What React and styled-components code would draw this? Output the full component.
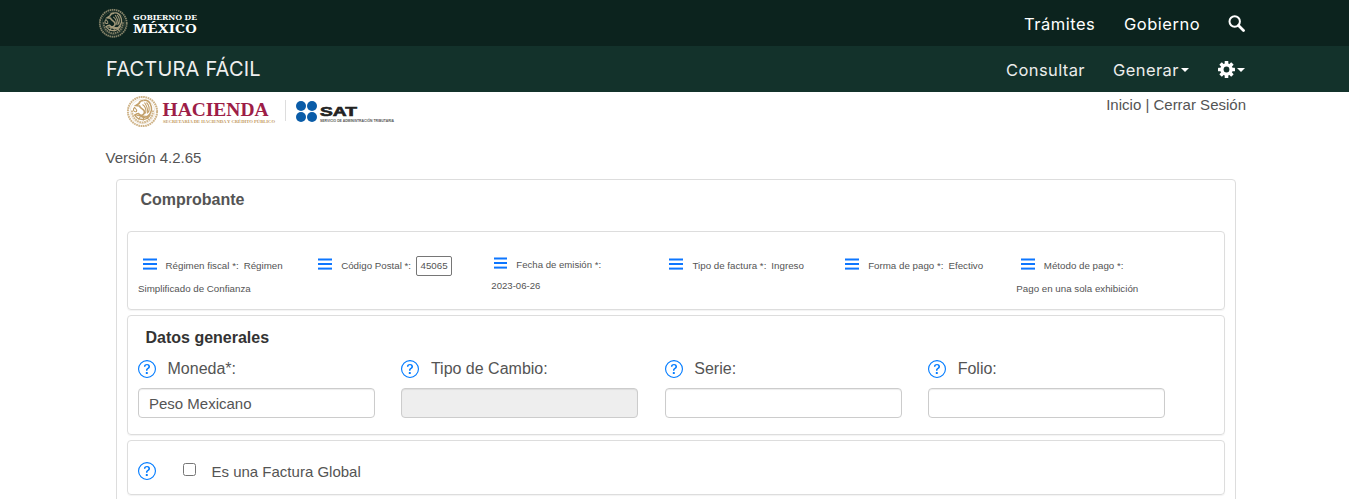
import React from "react";
import styled, { createGlobalStyle } from "styled-components";

const GlobalStyle = createGlobalStyle`
  *, *::before, *::after { box-sizing: border-box; }
  html, body { height: 499px; overflow: hidden; }
  body {
    margin: 0;
    background: #fff;
    color: #545454;
    font-family: "Liberation Sans", Arial, sans-serif;
    font-size: 16px;
  }
`;

const Bar = styled.header`
  height: 46px;
  background: ${(p) => (p.$sub ? "#13322b" : "#0c231e")};
`;

const BarInner = styled.div`
  width: 1140px;
  height: 100%;
  margin-left: 105px;
  display: flex;
  align-items: center;
  justify-content: space-between;
`;

const Brand = styled.svg`
  display: block;
  margin-left: -7px;
`;

const AppName = styled.h1`
  margin: 0;
  padding: 0 0 1px 1px;
  font: 400 20px/24px Inter, sans-serif;
  letter-spacing: ${(p) => p.$spacing};
  color: #efefef;
  white-space: nowrap;
`;

const Nav = styled.nav`
  display: flex;
  align-items: center;
  height: 100%;
`;

const NavLink = styled.a`
  width: ${(p) => p.$width}px;
  margin-right: ${(p) => p.$gap}px;
  font: 400 16.5px/20px Inter, sans-serif;
  letter-spacing: ${(p) => p.$spacing || 0}px;
  color: ${(p) => (p.$dim ? "#ececec" : "#fff")};
  white-space: nowrap;
  padding-top: 1px;
`;

const Caret = styled.span`
  border: 4px solid transparent;
  border-top-color: #fff;
  border-bottom: 0;
  margin: 1px ${(p) => p.$right || 0}px 0 ${(p) => p.$left || 0}px;
`;

const Page = styled.main`
  width: 1141px;
  margin-left: 105px;
`;

const TopRow = styled.div`
  display: flex;
  justify-content: space-between;
  height: 56px;
`;

const Logos = styled.svg`
  display: block;
  margin-left: 21px;
`;

const Session = styled.div`
  padding-top: 4px;
  font-size: 15px;
  line-height: 18px;
  letter-spacing: ${(p) => p.$spacing || 0}px;
`;

const Version = styled.div`
  height: 31px;
  padding: 1px 0 0 0.5px;
  font-size: 15px;
  line-height: 18px;
`;

const Outer = styled.section`
  width: 1120px;
  height: 420px;
  margin-left: 11px;
  padding: 0 10px;
  border: 1px solid #ddd;
  border-radius: 4px;
`;

const PanelTitle = styled.h2`
  height: 51px;
  margin: 0;
  padding: 10px 0 0 13.5px;
  font-size: 16px;
  line-height: 19px;
`;

const Card = styled.section`
  height: ${(p) => p.$height}px;
  margin-bottom: 5px;
  padding-left: 10px;
  border: 1px solid #ddd;
  border-radius: 4px;
  box-shadow: 0 1px 1px rgba(0, 0, 0, 0.05);
`;

const Summary = styled.div`
  display: grid;
  grid-template-columns: repeat(6, 175.67px);
  padding-top: 22px;
`;

const SummaryItem = styled.div`
  width: 152px;
  font-size: ${(p) => (p.$small ? 9.6 : 9.75)}px;
  padding-left: ${(p) => (p.$small ? 2 : 0)}px;
`;

const SummaryLine = styled.div`
  display: flex;
  align-items: center;
  height: ${(p) => (p.$small ? 21 : 23)}px;
  white-space: nowrap;
`;

const MenuIcon = styled.svg`
  margin: ${(p) => (p.$small ? "-3px 9px 0 3px" : "-4px 9px 0 4.5px")};
  flex: none;
`;

const Label = styled.span`
  margin-right: 5px;
`;

const CodeBox = styled.span`
  width: 36px;
  height: 20px;
  border: 1px solid #767676;
  border-radius: 2px;
  line-height: 18px;
  text-align: center;
`;

const SectionTitle = styled.h3`
  margin: 0;
  padding: 12px 0 0 7.5px;
  height: 44px;
  font-size: 16px;
  line-height: 19px;
  color: #333;
`;

const Fields = styled.div`
  display: grid;
  grid-template-columns: repeat(4, 263.4px);
`;

const FieldLabel = styled.label`
  display: flex;
  align-items: center;
  gap: 11.5px;
  height: 18px;
  margin-bottom: 10px;
`;

const Input = styled.input`
  display: block;
  width: 237px;
  height: 30px;
  padding: 0 10px;
  border: 1px solid #ccc;
  border-radius: 4px;
  box-shadow: inset 0 1px 1px rgba(0, 0, 0, 0.075);
  background: ${(p) => (p.disabled ? "#eee" : "#fff")};
  color: #545454;
  font: 15px "Liberation Sans", Arial, sans-serif;
`;

const CheckRow = styled.label`
  display: flex;
  align-items: center;
  height: 58px;
  padding-top: 2px;
  font-size: 15px;
`;

const Checkbox = styled.input`
  width: 13px;
  height: 13px;
  margin: -4px 15.5px 0 27px;
`;

function Help() {
  return (
    <svg width="18" height="18" viewBox="0 0 16 16" fill="#007bff">
      <path d="M8 15A7 7 0 1 1 8 1a7 7 0 0 1 0 14zm0 1A8 8 0 1 0 8 0a8 8 0 0 0 0 16z" />
      <path d="M5.255 5.786a.237.237 0 0 0 .241.247h.825c.138 0 .248-.113.266-.25.09-.656.54-1.134 1.342-1.134.686 0 1.314.343 1.314 1.168 0 .635-.374.927-.965 1.371-.673.489-1.206 1.06-1.168 1.987l.003.217a.25.25 0 0 0 .25.246h.811a.25.25 0 0 0 .25-.25v-.105c0-.718.273-.927 1.01-1.486.609-.463 1.244-.977 1.244-2.056 0-1.511-1.276-2.241-2.673-2.241-1.267 0-2.655.59-2.75 2.286zm1.557 5.763c0 .533.425.927 1.01.927.609 0 1.028-.394 1.028-.927 0-.552-.42-.94-1.029-.94-.584 0-1.009.388-1.009.94z" />
    </svg>
  );
}

function Bars({ small }) {
  const w = small ? 13 : 14;
  return (
    <MenuIcon $small={small} width={w} height="12" viewBox={`0 0 ${w} 12`} fill="#0d76ff">
      <rect width={w} height="2" y="0.5" />
      <rect width={w} height="2" y="5" />
      <rect width={w} height="2" y="9.6" />
    </MenuIcon>
  );
}

/* Coat of arms: ring of lettering, wreath and eagle */
function Seal({ x, y, size, color }) {
  return (
    <svg x={x} y={y} width={size} height={size} viewBox="0 0 32 32" fill="none" stroke={color}>
      <circle cx="16" cy="16" r="14.6" strokeWidth="2" strokeDasharray="1.7 .6" opacity=".8" />
      <circle cx="16" cy="16" r="12.4" strokeWidth=".5" opacity=".5" />
      <path d="M5.5 15c0 7 4.500 11.500 10.500 12 6-.5 10.500-5 10.500-12" strokeWidth="2" strokeDasharray="1.800 .6" opacity=".75" />
      <path d="M8 19c2 4 5 5 8 5s6-1 8-5" strokeWidth="1.300" />
      <path d="M17 5c3-1 6 1 7 4 2 4 1 8-2 11-2 2-5 2-7 1l-3-3c-2 0-3 1-4 2" strokeWidth="1.500" />
      <path d="M17 5c-2 0-4 1-4.500 3l-3 2 3.500.500c1 3 5 3 5 6s-3 4-6 3" strokeWidth="1.700" />
      <path d="M18 7c2 3 4 6 3 11M20 7c3 3 3 7 2 10M16 9c3 2 4 5 3 9M8 12c-2 2-1 5 2 4 1-2-1-3-2-4zM10 20l12 1M14 21l-2 3m5-3v4m3-4 2 3" strokeWidth="1.100" />
    </svg>
  );
}

const summary = [
  { label: "Régimen fiscal *:", value: "Régimen", more: "Simplificado de Confianza" },
  { label: "Código Postal *:", code: "45065" },
  { label: "Fecha de emisión *:", more: "2023-06-26", small: true },
  { label: "Tipo de factura *:", value: "Ingreso" },
  { label: "Forma de pago *:", value: "Efectivo" },
  { label: "Método de pago *:", more: "Pago en una sola exhibición" },
];

const fields = [
  { label: "Moneda*:", value: "Peso Mexicano" },
  { label: "Tipo de Cambio:", value: "", disabled: true },
  { label: "Serie:", value: "" },
  { label: "Folio:", value: "" },
];

export default function App() {
  return (
    <>
      <GlobalStyle />
      <Bar>
        <BarInner>
          <Brand width="110" height="46" viewBox="0 0 110 46">
            <Seal x={0.5} y={8.500} size={29.500} color="#a49b7c" />
            <g fill="#fff" fontFamily="'Noto Serif', 'DejaVu Serif', serif" fontWeight="700">
              <text x="35" y="19.500" fontSize="7.800" textLength="64" lengthAdjust="spacingAndGlyphs">GOBIERNO DE</text>
              <text x="35" y="33" fontSize="12.500" textLength="64" lengthAdjust="spacingAndGlyphs">MÉXICO</text>
            </g>
          </Brand>
          <Nav>
            <NavLink $width={70} $gap={30} $spacing={0.5}>Trámites</NavLink>
            <NavLink $width={75} $gap={29} $spacing={0.5}>Gobierno</NavLink>
            <svg width="17" height="17" viewBox="0 0 17 17" fill="none" stroke="#fff">
              <circle cx="6.700" cy="6.500" r="5.200" strokeWidth="2" />
              <path d="M10.500 10.500l5 5" strokeWidth="2.800" strokeLinecap="round" />
            </svg>
          </Nav>
        </BarInner>
      </Bar>
      <Bar $sub>
        <BarInner>
          <AppName $spacing="0.2px">FACTURA FÁCIL</AppName>
          <Nav>
            <NavLink $dim $width={78} $gap={29} $spacing={0.4}>Consultar</NavLink>
            <NavLink $dim $width={66} $gap={0} $spacing={0.4}>Generar</NavLink>
            <Caret $left={2} $right={29} />
            <svg width="17" height="17" viewBox="-8.500 -8.500 17 17" fill="#fff">
              {[0, 45, 90, 135].map((a) => (
                <rect key={a} x="-1.800" y="-8.500" width="3.600" height="17" rx=".5" transform={`rotate(${a})`} />
              ))}
              <circle r="6.200" />
              <circle r="2.900" fill="#13322b" />
            </svg>
            <Caret $left={2} />
          </Nav>
        </BarInner>
      </Bar>
      <Page>
        <TopRow>
          <Logos width="270" height="38" viewBox="0 0 270 38">
            <Seal x={0.5} y={3.500} size={32} color="#c3a06a" />
            <text x="36.500" y="23.500" fontSize="18.500" fontWeight="700" fill="#9d1d47" fontFamily="'Liberation Serif', serif" textLength="106" lengthAdjust="spacingAndGlyphs">HACIENDA</text>
            <text x="37" y="30.500" fontSize="4.600" fontWeight="700" fill="#c39a62" fontFamily="'Liberation Serif', serif" textLength="112" lengthAdjust="spacingAndGlyphs">SECRETARÍA DE HACIENDA Y CRÉDITO PÚBLICO</text>
            <path d="M159.500 8v21" stroke="#ddd" />
            <g fill="#0a5ca8">
              <circle cx="175" cy="14" r="5" />
              <circle cx="186" cy="14" r="5" />
              <circle cx="175" cy="25" r="5" />
              <circle cx="186" cy="25" r="5" />
            </g>
            <text x="194" y="24" fontSize="13" fontWeight="700" fill="#222" stroke="#222" strokeWidth=".6" fontFamily="'Liberation Sans', sans-serif" textLength="37" lengthAdjust="spacingAndGlyphs">SAT</text>
            <text x="194" y="30" fontSize="3.800" fontWeight="700" fill="#555" fontFamily="'Liberation Sans', sans-serif" textLength="74" lengthAdjust="spacingAndGlyphs">SERVICIO DE ADMINISTRACIÓN TRIBUTARIA</text>
          </Logos>
          <Session>Inicio | Cerrar Sesión</Session>
        </TopRow>
        <Version>Versión 4.2.65</Version>
        <Outer>
          <PanelTitle>Comprobante</PanelTitle>
          <Card $height={79}>
            <Summary>
              {summary.map((s) => (
                <SummaryItem key={s.label} $small={s.small}>
                  <SummaryLine $small={s.small}>
                    <Bars small={s.small} />
                    <Label>{s.label}</Label>
                    {s.value}
                    {s.code && <CodeBox>{s.code}</CodeBox>}
                  </SummaryLine>
                  {s.more && <SummaryLine $small={s.small}>{s.more}</SummaryLine>}
                </SummaryItem>
              ))}
            </Summary>
          </Card>
          <Card $height={120}>
            <SectionTitle>Datos generales</SectionTitle>
            <Fields>
              {fields.map((f) => (
                <div key={f.label}>
                  <FieldLabel><Help />{f.label}</FieldLabel>
                  <Input defaultValue={f.value} disabled={f.disabled} />
                </div>
              ))}
            </Fields>
          </Card>
          <Card $height={55}>
            <CheckRow>
              <Help />
              <Checkbox type="checkbox" />
              Es una Factura Global
            </CheckRow>
          </Card>
        </Outer>
      </Page>
    </>
  );
}
